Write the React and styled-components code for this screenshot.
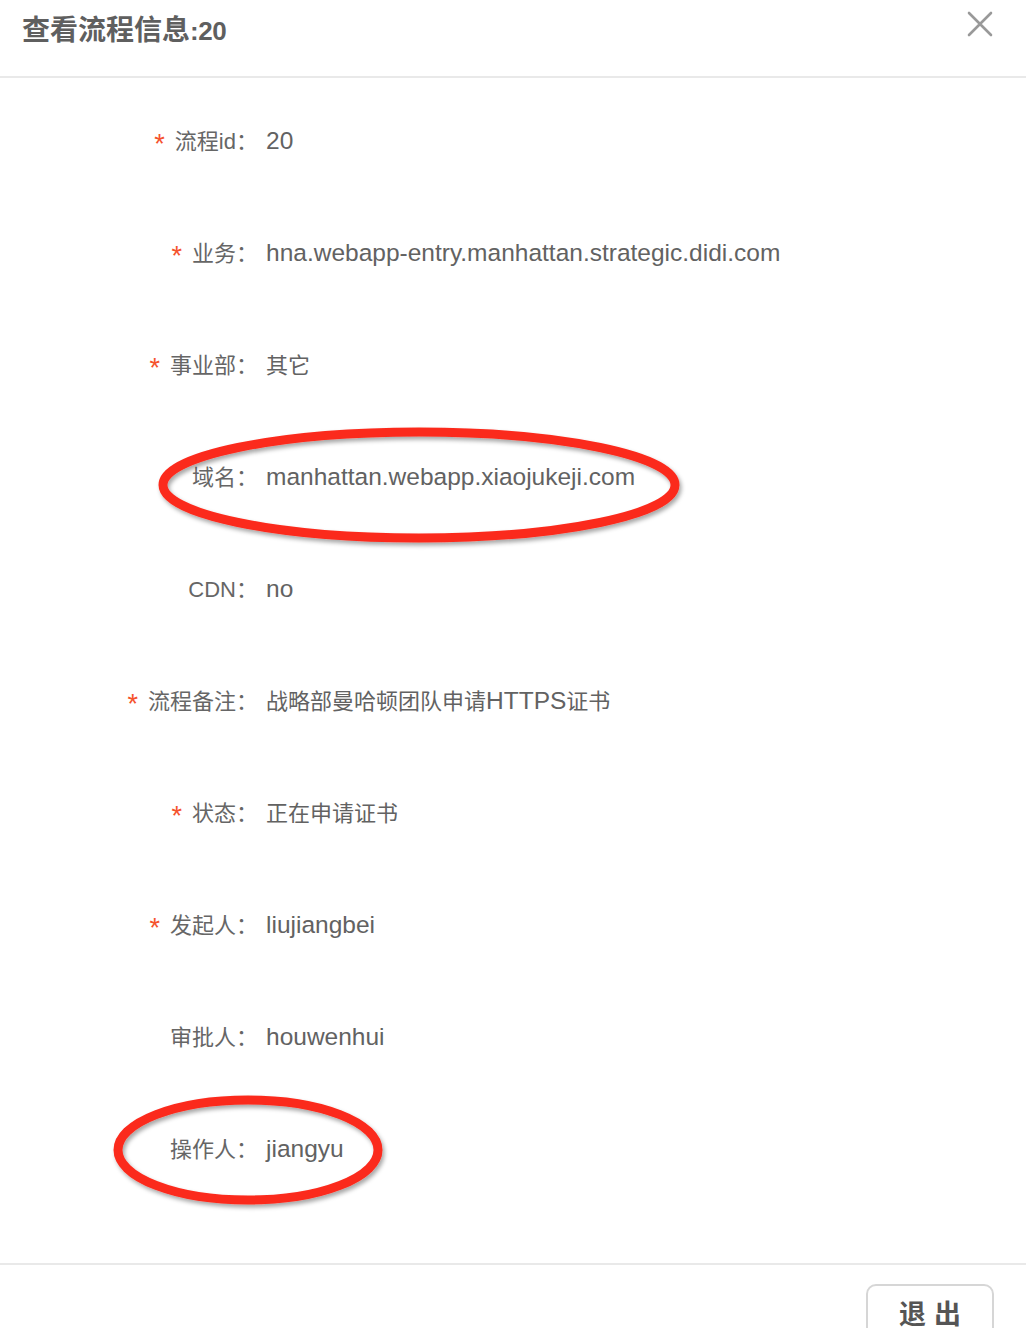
import styled, { createGlobalStyle } from "styled-components";

const GlobalStyle = createGlobalStyle`
  body {
    margin: 0;
    background: #fff;
    font-family: "Liberation Sans", "Noto Sans CJK SC", sans-serif;
  }
`;

const Modal = styled.div`
  width: 1026px;
  background: #fff;
  color: #666;
`;

const Header = styled.div`
  display: flex;
  justify-content: space-between;
  align-items: flex-start;
  height: 78px;
  padding: 10px 32px 0 22px;
  box-sizing: border-box;
  border-bottom: 2px solid #e9e9e9;
`;

const Title = styled.div`
  line-height: 36px;
  font-weight: 700;
  color: #5f5f5f;
`;

// CJK and latin runs are sized apart, the latin face runs wider in the shot
const sizes = {
  title: { cjk: 28, latin: 26 },
  label: { cjk: 22, latin: 22 },
  value: { cjk: 22, latin: 24.5 },
};

const Run = styled.span`
  font-family: ${({ $cjk }) =>
    $cjk ? '"Noto Sans CJK SC", sans-serif' : '"Liberation Sans", "Noto Sans CJK SC", sans-serif'};
  font-size: ${({ $cjk, $kind }) => sizes[$kind][$cjk ? "cjk" : "latin"]}px;
  letter-spacing: ${({ $kind, $cjk }) => ($kind === "title" && !$cjk ? "-0.5px" : "0")};
`;

const CloseButton = styled.button`
  width: 28px;
  height: 28px;
  padding: 0;
  border: none;
  background: transparent;
  cursor: pointer;
`;

const Body = styled.div`
  padding: 7px 0 58px;
`;

const Row = styled.div`
  position: relative;
  display: grid;
  grid-template-columns: 258px 1fr;
  column-gap: 8px;
  align-content: center;
  align-items: baseline;
  height: 112px;
  line-height: 32px;
`;

const Label = styled.div`
  display: flex;
  justify-content: flex-end;
  align-items: baseline;
  color: #666;
`;

const Required = styled.span`
  color: #f5522d;
  font-family: "Liberation Sans", sans-serif;
  font-size: 27px;
  line-height: 20px;
  margin-right: 10px;
  position: relative;
  top: 4px;
`;

const Value = styled.div`
  color: #626262;
`;

const Mark = styled.svg`
  position: absolute;
  left: 0;
  top: 0;
  width: 100%;
  height: 100%;
  overflow: visible;
  pointer-events: none;
`;

const Footer = styled.div`
  display: flex;
  justify-content: flex-end;
  border-top: 2px solid #e9e9e9;
  padding: 19px 32px 0 0;
`;

const ExitButton = styled.button`
  width: 128px;
  height: 56px;
  border: 2px solid #d6d6d6;
  border-radius: 10px;
  background: #fff;
  color: #555;
  font-family: "Noto Sans CJK SC", sans-serif;
  font-size: 27px;
  font-weight: 700;
  letter-spacing: 8px;
  padding: 0 0 0 8px;
  line-height: 1;
`;

const rows = [
  { label: "流程id", value: "20", required: true },
  { label: "业务", value: "hna.webapp-entry.manhattan.strategic.didi.com", required: true },
  { label: "事业部", value: "其它", required: true },
  { label: "域名", value: "manhattan.webapp.xiaojukeji.com", mark: { cx: 419, cy: 64, rx: 256, ry: 53 } },
  { label: "CDN", value: "no" },
  { label: "流程备注", value: "战略部曼哈顿团队申请HTTPS证书", required: true },
  { label: "状态", value: "正在申请证书", required: true },
  { label: "发起人", value: "liujiangbei", required: true },
  { label: "审批人", value: "houwenhui" },
  { label: "操作人", value: "jiangyu", mark: { cx: 248, cy: 57, rx: 130, ry: 50 } },
];

const cjkRe = /([\u3000-\u9fff\uff00-\uffef]+)/;

const Mixed = ({ text, kind }) =>
  text
    .split(cjkRe)
    .filter(Boolean)
    .map((part, i) => (
      <Run key={i} $cjk={cjkRe.test(part)} $kind={kind}>
        {part}
      </Run>
    ));

const App = () => {
  return (
    <Modal>
      <GlobalStyle />
      <Header>
        <Title>
          <Mixed text="查看流程信息:20" kind="title" />
        </Title>
        <CloseButton aria-label="close">
          <svg width="28" height="28" viewBox="0 0 28 28">
            <path d="M3 3 L25 25 M25 3 L3 25" stroke="#999" strokeWidth="2.6" strokeLinecap="round" />
          </svg>
        </CloseButton>
      </Header>

      <Body>
        {rows.map((r) => (
          <Row key={r.label}>
            <Label>
              {r.required && <Required>*</Required>}
              <Mixed text={r.label + "："} kind="label" />
            </Label>
            <Value>
              <Mixed text={r.value} kind="value" />
            </Value>
            {r.mark && (
              <Mark>
                <defs>
                  <filter id={"sh" + r.label} x="-10%" y="-30%" width="120%" height="160%">
                    <feDropShadow dx="2" dy="3" stdDeviation="2" floodColor="#000" floodOpacity="0.35" />
                  </filter>
                </defs>
                <ellipse
                  cx={r.mark.cx}
                  cy={r.mark.cy}
                  rx={r.mark.rx}
                  ry={r.mark.ry}
                  fill="none"
                  stroke="#fb2a1c"
                  strokeWidth="9"
                  filter={`url(#sh${r.label})`}
                />
              </Mark>
            )}
          </Row>
        ))}
      </Body>

      <Footer>
        <ExitButton>退出</ExitButton>
      </Footer>
    </Modal>
  );
};

export default App;
